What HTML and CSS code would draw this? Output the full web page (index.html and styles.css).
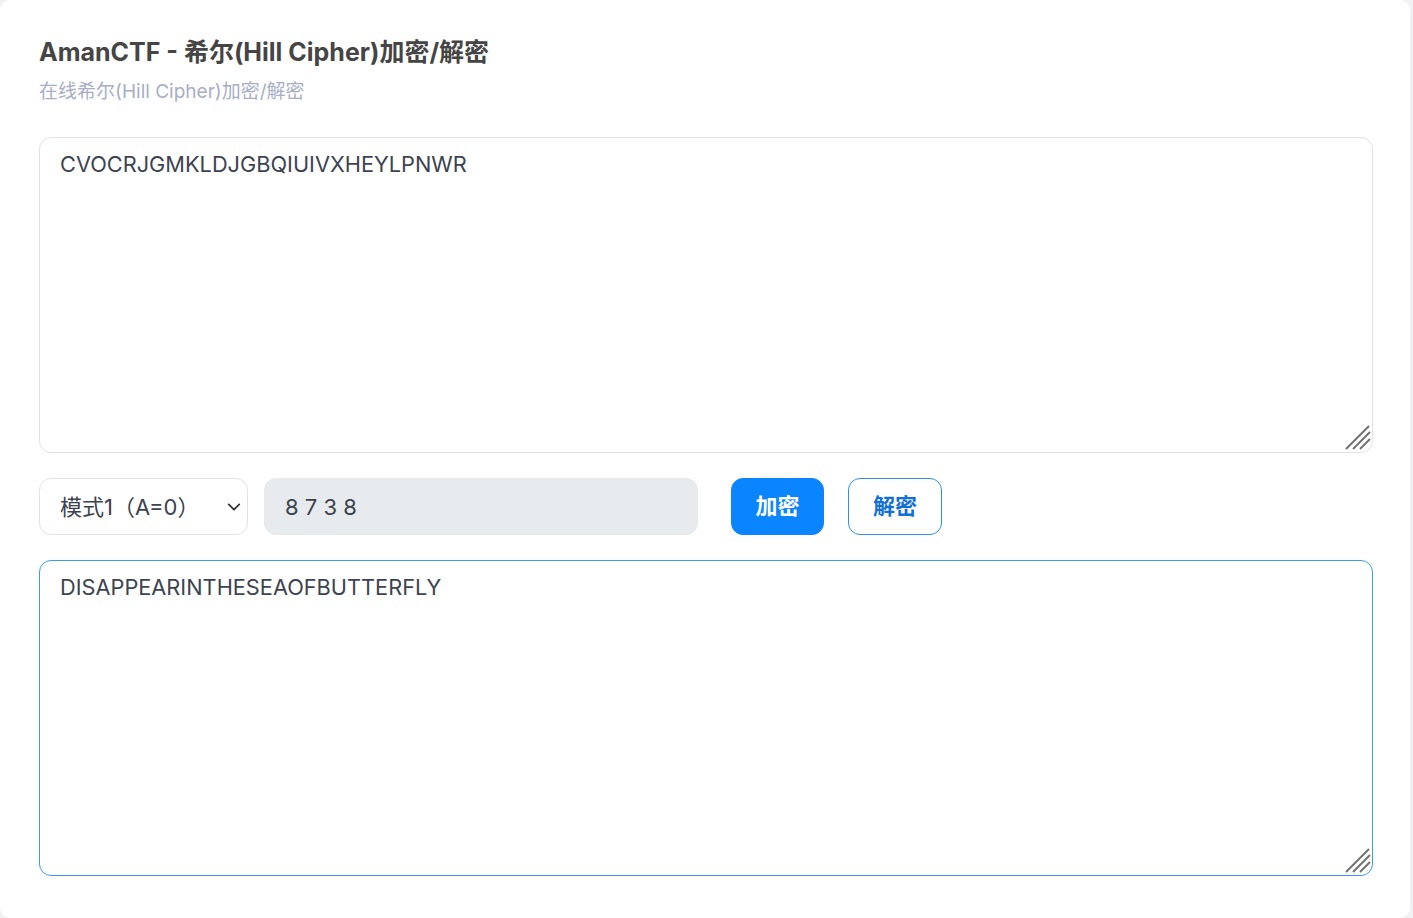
FILE: index.html
```html
<!DOCTYPE html>
<html lang="zh-CN">
<head>
<meta charset="utf-8">
<title>AmanCTF - 希尔(Hill Cipher)加密/解密</title>
<link rel="stylesheet" href="styles.css">
</head>
<body>
<div class="card">
  <h1 class="title">AmanCTF - 希尔(Hill Cipher)加密/解密</h1>
  <p class="subtitle">在线希尔(Hill Cipher)加密/解密</p>
  <div class="field">
    <textarea class="box">CVOCRJGMKLDJGBQIUIVXHEYLPNWR</textarea>
    <svg class="grip" width="26" height="26" viewBox="0 0 26 26"><path d="M1 25L24 2M8 25L25 8M15 25L25 15" stroke="#737373" stroke-width="2" fill="none"/></svg>
  </div>
  <div class="controls">
    <div class="select-wrap">
      <select class="select">
        <option>模式1（A=0）</option>
        <option>模式2（A=1）</option>
      </select>
      <svg class="chev" width="14" height="14" viewBox="0 0 16 16"><path d="M2 5l6 6 6-6" fill="none" stroke="#333" stroke-width="2" stroke-linecap="round" stroke-linejoin="round"/></svg>
    </div>
    <input class="key" type="text" value="8 7 3 8" readonly>
    <button class="btn btn-primary">加密</button>
    <button class="btn btn-outline">解密</button>
  </div>
  <div class="field field-2">
    <textarea class="box box-focus">DISAPPEARINTHESEAOFBUTTERFLY</textarea>
    <svg class="grip" width="26" height="26" viewBox="0 0 26 26"><path d="M1 25L24 2M8 25L25 8M15 25L25 15" stroke="#737373" stroke-width="2" fill="none"/></svg>
  </div>
</div>
</body>
</html>
```
FILE: styles.css
```css
html, body {
  margin: 0;
  padding: 0;
  background: #f1f1f3;
  font-family: Inter, "Noto Sans CJK SC", sans-serif;
}
.card {
  width: 1410px;
  box-sizing: border-box;
  background: #ffffff;
  border-radius: 10px;
  padding: 36px 38px 40px 39px;
  min-height: 918px;
}
.title {
  margin: 0;
  font-size: 25px;
  line-height: 32px;
  font-weight: 700;
  color: #454545;
}
.subtitle {
  margin: 11px 0 0;
  font-size: 19px;
  line-height: 26px;
  color: #a7aec6;
}
.field {
  position: relative;
  width: 1334px;
  margin-top: 32px;
}
.field-2 {
  margin-top: 25px;
}
.grip {
  position: absolute;
  right: 2px;
  bottom: 3px;
  pointer-events: none;
}
.box {
  display: block;
  box-sizing: border-box;
  width: 1334px;
  height: 316px;
  margin: 0;
  padding: 11px 20px;
  border: 1px solid #e2e2e4;
  border-radius: 12px;
  font-family: Inter, "Noto Sans CJK SC", sans-serif;
  font-size: 21.75px;
  line-height: 30px;
  color: #3d4350;
  outline: none;
  resize: none;
}
.box-focus {
  border-color: #3a9cf3;
}
.controls {
  display: flex;
  align-items: center;
  margin-top: 25px;
  height: 57px;
}
.select-wrap {
  position: relative;
  width: 209px;
  height: 57px;
}
.select {
  -webkit-appearance: none;
  appearance: none;
  width: 100%;
  height: 100%;
  box-sizing: border-box;
  border: 1px solid #e2e2e4;
  border-radius: 12px;
  background: #fff;
  padding: 0 20px;
  font-family: Inter, "Noto Sans CJK SC", sans-serif;
  font-size: 22px;
  color: #3d4350;
  outline: none;
}
.chev {
  position: absolute;
  right: 7px;
  top: 22px;
  pointer-events: none;
}
.key {
  margin-left: 16px;
  width: 434px;
  height: 57px;
  box-sizing: border-box;
  border: 1px solid #e6e9ec;
  border-radius: 12px;
  background: #e8ebee;
  padding: 0 20px;
  font-family: Inter, "Noto Sans CJK SC", sans-serif;
  font-size: 22px;
  color: #3d4350;
  outline: none;
}
.btn {
  height: 57px;
  width: 93px;
  padding: 0 0 5px;
  box-sizing: border-box;
  border-radius: 12px;
  font-family: Inter, "Noto Sans CJK SC", sans-serif;
  font-size: 22px;
  font-weight: 700;
  cursor: pointer;
}
.btn-primary {
  margin-left: 33px;
  background: #0a84ff;
  border: 1px solid #0a84ff;
  color: #ffffff;
}
.btn-outline {
  margin-left: 24px;
  width: 94px;
  background: #ffffff;
  border: 1px solid #2d8ef0;
  color: #1170d9;
}
```
